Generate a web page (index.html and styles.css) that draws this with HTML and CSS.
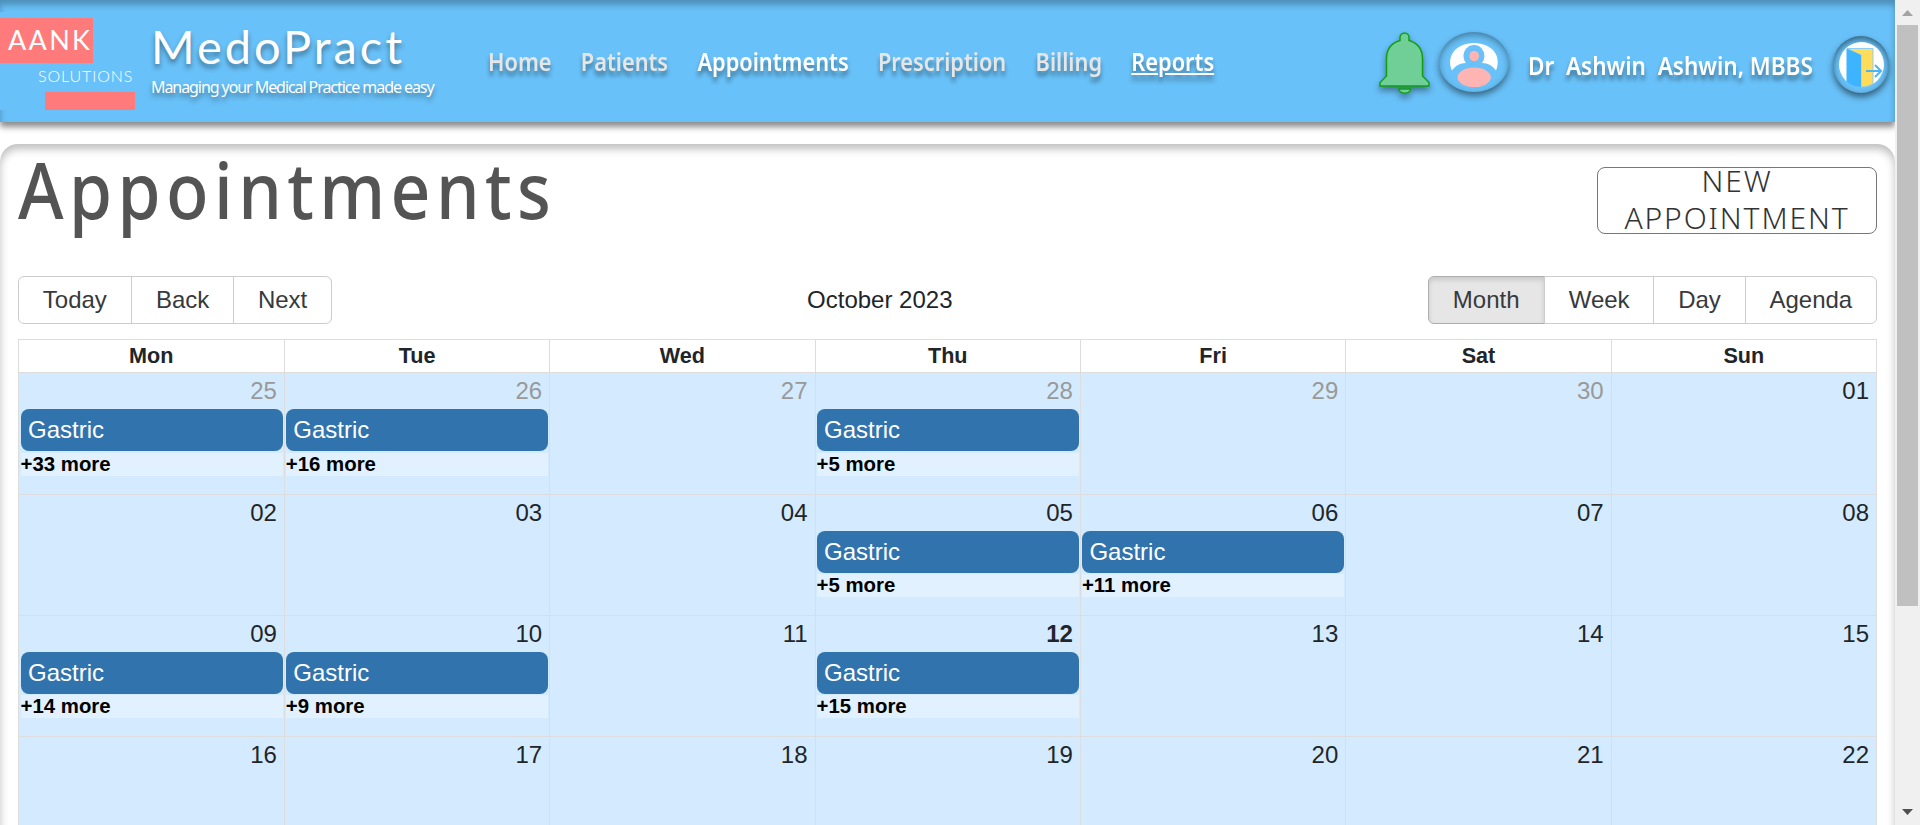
FILE: index.html
```html
<!DOCTYPE html>
<html lang="en">
<head>
<meta charset="utf-8">
<title>MedoPract - Appointments</title>
<link rel="stylesheet" href="styles.css">
</head>
<body>
<div class="page">
  <header class="header">
    <div class="logo">
      <div class="logo-top"><span class="logo-aank">AANK</span></div>
      <div class="logo-sub"><span>SOLUTIONS</span></div>
      <div class="logo-bar"></div>
    </div>
    <div class="brand">
      <div class="brand-name">MedoPract</div>
      <div class="brand-tag">Managing your Medical Practice made easy</div>
    </div>
    <nav class="nav">
      <a>Home</a><a>Patients</a><a class="active">Appointments</a><a>Prescription</a><a>Billing</a><a class="active underlined">Reports</a>
    </nav>
    <div class="user">
      <svg class="bell" width="52" height="62" viewBox="0 0 52 62">
        <path d="M21 8.500V5.500A4.500 4.500 0 0 1 30 5.500V8.500C39 11 43.500 18 43.500 27V44L50 50.500V54H1V50.500L7.500 44V27C7.500 18 12 11 21 8.500Z"/>
        <path d="M20 57H31.500C31.500 62.500 20 62.500 20 57Z"/>
      </svg>
      <div class="avatar">
        <svg width="70" height="60" viewBox="0 0 70 60">
          <path d="M13 38.500C7 25 16 11 35 11S63 25 57 38.500C54 34 49 31 43 31H27C21 31 16 34 13 38.500Z" fill="#fff"/>
          <ellipse cx="35" cy="24" rx="10.500" ry="11" fill="#68c1f8"/>
          <ellipse cx="35.200" cy="24" rx="4.800" ry="5.300" fill="#ffb4b4"/>
          <ellipse cx="35.200" cy="45.300" rx="16.700" ry="9.700" fill="#ffb4b4"/>
        </svg>
      </div>
      <div class="user-name"><span>Dr&nbsp; Ashwin&nbsp; Ashwin, MBBS</span></div>
      <div class="logout">
        <svg width="56" height="57" viewBox="0 0 56 57">
          <ellipse cx="28.500" cy="28.500" rx="22.500" ry="22.500" fill="#fff"/>
          <path d="M14 12.500H40V47.500C37 49.500 33 51 28 51V19Z" fill="#ffdc5a" stroke="#8ccff5"/>
          <path d="M13.500 12.500L28 19V51C22 51 17 49 13.500 45.500Z" fill="#3db4ff"/>
          <path d="M33 35H48M42 29L48 35L42 41" fill="none" stroke="#4ab5f2" stroke-width="2"/>
        </svg>
      </div>
    </div>
  </header>

  <main class="panel">
    <div class="title-row">
      <h1 class="title">Appointments</h1>
      <button class="new-btn"><span>NEW APPOINTMENT</span></button>
    </div>
    <div class="toolbar">
      <div class="group"><button>Today</button><button>Back</button><button>Next</button></div>
      <div class="label">October 2023</div>
      <div class="group"><button class="pressed">Month</button><button>Week</button><button>Day</button><button>Agenda</button></div>
    </div>
    <div class="calendar">
      <div class="row head"><div>Mon</div><div>Tue</div><div>Wed</div><div>Thu</div><div>Fri</div><div>Sat</div><div>Sun</div></div>
      <div class="row week">
        <div class="off"><p>25</p><b>Gastric</b><i>+33 more</i></div>
        <div class="off"><p>26</p><b>Gastric</b><i>+16 more</i></div>
        <div class="off"><p>27</p></div>
        <div class="off"><p>28</p><b>Gastric</b><i>+5 more</i></div>
        <div class="off"><p>29</p></div>
        <div class="off"><p>30</p></div>
        <div><p>01</p></div>
      </div>
      <div class="row week">
        <div><p>02</p></div>
        <div><p>03</p></div>
        <div><p>04</p></div>
        <div><p>05</p><b>Gastric</b><i>+5 more</i></div>
        <div><p>06</p><b>Gastric</b><i>+11 more</i></div>
        <div><p>07</p></div>
        <div><p>08</p></div>
      </div>
      <div class="row week">
        <div><p>09</p><b>Gastric</b><i>+14 more</i></div>
        <div><p>10</p><b>Gastric</b><i>+9 more</i></div>
        <div><p>11</p></div>
        <div class="now"><p>12</p><b>Gastric</b><i>+15 more</i></div>
        <div><p>13</p></div>
        <div><p>14</p></div>
        <div><p>15</p></div>
      </div>
      <div class="row week">
        <div><p>16</p></div>
        <div><p>17</p></div>
        <div><p>18</p></div>
        <div><p>19</p></div>
        <div><p>20</p></div>
        <div><p>21</p></div>
        <div><p>22</p></div>
      </div>
    </div>
  </main>
</div>
<aside class="scrollbar">
  <svg width="11" height="6" viewBox="0 0 11 6"><path d="M0 6L5.500 0L11 6Z" fill="#a3a3a3"/></svg>
  <div class="thumb"></div>
  <svg class="down" width="11" height="6" viewBox="0 0 11 6"><path d="M0 0L5.500 6L11 0Z" fill="#505050"/></svg>
</aside>
</body>
</html>
```
FILE: styles.css
```css
* { box-sizing: border-box; }
html { height: 100%; overflow: hidden; }
body {
  margin: 0;
  height: 825px;
  overflow: hidden;
  display: flex;
  background: #fff;
  color: #212529;
  font-family: "Liberation Sans", Arial, sans-serif;
  font-size: 24px;
}
.page { width: 1895px; height: 825px; overflow: hidden; }

.header {
  display: flex;
  height: 122px;
  background: #68c1f8;
  box-shadow: 0 5px 6px rgba(0,0,0,.45), inset 0 5px 6px rgba(0,0,0,.26);
  color: #fff;
  font-family: "Noto Sans", sans-serif;
}
.logo {
  width: 135px;
  height: 98px;
  margin-top: 12px;
  padding-top: 6px;
  background: #68c1f8;
  font-family: Lato, sans-serif;
  white-space: nowrap;
}
.logo-top { width: 93px; height: 45px; background: #ff7b7b; padding-left: 8px; }
.logo-aank { display: block; font-size: 27px; line-height: 43px; font-weight: 400; letter-spacing: 2.300px; }
.logo-sub { height: 29px; padding-left: 38px; font-size: 16px; line-height: 26px; font-weight: 300; letter-spacing: .9px; }
.logo-bar { width: 90px; height: 18px; margin-left: 45px; background: #ff7b7b; }

.brand { width: 337px; margin-left: 16px; text-shadow: 0 4px 5px rgba(0,0,0,.4); white-space: nowrap; }
.brand-name { font-family: Lato, sans-serif; font-size: 47px; line-height: 56px; padding-top: 18px; letter-spacing: 3px; }
.brand-tag { padding-top: 1px; font-size: 16px; line-height: 24px; letter-spacing: -1.070px; }

.nav {
  display: flex;
  gap: 35px;
  width: 750px;
  padding-top: 43px;
  font-size: 26px;
  line-height: 36px;
  font-weight: 600;
  color: #e6e6e6;
  text-shadow: 0 5px 5px rgba(0,0,0,.4);
  white-space: nowrap;
  transform: scaleX(.837);
  transform-origin: 0 0;
}
.nav .active { color: #fff; }
.underlined { text-decoration: underline; }

.user { display: flex; margin-left: 141px; }
.bell { margin: 32px 0 0 0; flex: none; overflow: visible; fill: #70cf97; stroke: #12a012; stroke-width: 1.5; filter: drop-shadow(0 4px 3px rgba(0,0,0,.4)); }
.avatar { flex: none; width: 70px; height: 60px; margin: 32px 0 0 8px; border-radius: 50%; box-shadow: 0 4px 6px rgba(0,0,0,.45), inset 0 3px 6px rgba(0,0,0,.35); }
.avatar svg, .logout svg { display: block; }
.user-name { flex: none; width: 305px; margin-left: 19px; padding-top: 47px; font-size: 26px; line-height: 36px; font-weight: 600; white-space: nowrap; text-shadow: 0 5px 5px rgba(0,0,0,.4); }
.user-name span { display: inline-block; transform: scaleX(.866); transform-origin: 0 0; }
.logout { flex: none; width: 56px; height: 57px; margin-top: 36px; border-radius: 50%; box-shadow: 0 4px 6px rgba(0,0,0,.5), inset 0 3px 6px rgba(0,0,0,.5); }

.panel {
  height: 1000px;
  margin-top: 22px;
  padding: 0 18px 0 17.500px;
  border-radius: 18px;
  box-shadow: inset 0 5px 8px rgba(0,0,0,.26);
}
.title-row { display: flex; justify-content: space-between; height: 132px; }
.title {
  margin: 0;
  font-family: "Noto Sans", sans-serif;
  font-size: 78px;
  line-height: 90px;
  font-weight: 500;
  color: #545454;
  letter-spacing: 6px;
  white-space: nowrap;
  transform: scaleX(.893);
  transform-origin: 0 0;
}
.new-btn {
  width: 280px;
  height: 67px;
  margin-top: 23px;
  padding: 0 15px;
  border: 1px solid #777;
  border-radius: 8px;
  background: #fff;
  color: #333;
  font-family: "Noto Sans", sans-serif;
  font-size: 30px;
  line-height: 37px;
  font-weight: 300;
  letter-spacing: 1.900px;
}
.new-btn span { display: block; margin: -7px 0 -4px; }

.toolbar { display: flex; height: 63.300px; }
.label { flex: 1; text-align: center; line-height: 48px; }
.group { display: flex; height: 48px; }
.group button {
  padding: 0 23.800px;
  border: 1px solid #ccc;
  background: #fff;
  color: #373a3c;
  font: inherit;
}
.group button + button { margin-left: -1px; }
.group button:first-child { padding: 0 24.300px; border-radius: 6px 0 0 6px; }
.group button:last-child { border-radius: 0 6px 6px 0; }
.group .pressed { background: #e6e6e6; border-color: #adadad; box-shadow: inset 0 3px 5px rgba(0,0,0,.125); }

.calendar { border: 1px solid #ddd; }
.row { display: grid; grid-template-columns: repeat(7, 1fr); }
.row > div + div { border-left: 1px solid #ddd; }
.head { height: 32px; font-size: 21.600px; line-height: 31px; font-weight: 700; text-align: center; }
.week { height: 121.300px; border-top: 1px solid #ddd; background: #d4ebff; }
.week > div { padding-left: 1px; min-width: 0; }
.week > div:first-child { padding-left: 2px; }
.week p { margin: 0; height: 36px; padding-right: 7px; line-height: 35px; text-align: right; }
.week b { display: block; height: 42px; margin-right: 1px; padding-left: 7.500px; border-radius: 8px; background: #3174ad; color: #fff; font-weight: 400; line-height: 42px; }
.week i { display: block; height: 23px; margin: 1.600px 1px 0 0; background: rgba(255,255,255,.3); color: #000; font-size: 20.400px; line-height: 23px; font-weight: 700; font-style: normal; }
.week .off p { color: #999; }
.week .now p { font-weight: 700; }

.scrollbar { display: flex; flex-direction: column; align-items: center; width: 25px; height: 825px; padding: 10px 0; background: #f0f0f0; }
.thumb { width: 21px; height: 581px; margin-top: 9px; background: #c0c0c0; }
.down { margin-top: auto; }
```
